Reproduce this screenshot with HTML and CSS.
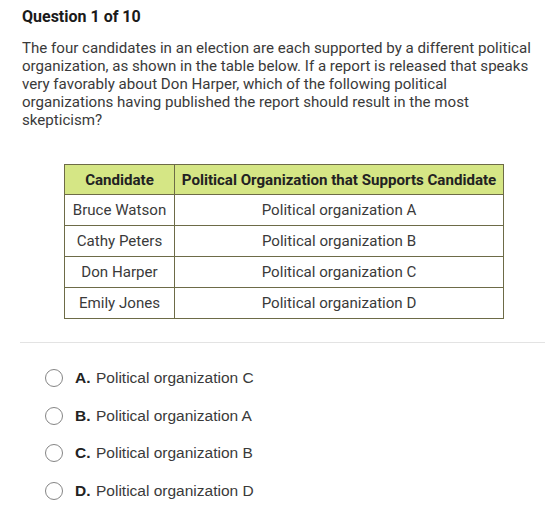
FILE: index.html
```html
<!DOCTYPE html>
<html>
<head>
<meta charset="utf-8">
<link rel="stylesheet" href="styles.css">
</head>
<body>
<div class="page">
  <h1 class="title">Question 1 of 10</h1>
  <p class="question">The four candidates in an election are each supported by a different political organization, as shown in the table below. If a report is released that speaks very favorably about Don Harper, which of the following political organizations having published the report should result in the most skepticism?</p>
  <table class="data">
    <thead>
      <tr><th class="c1">Candidate</th><th>Political Organization that Supports Candidate</th></tr>
    </thead>
    <tbody>
      <tr><td>Bruce Watson</td><td>Political organization A</td></tr>
      <tr><td>Cathy Peters</td><td>Political organization B</td></tr>
      <tr><td>Don Harper</td><td>Political organization C</td></tr>
      <tr><td>Emily Jones</td><td>Political organization D</td></tr>
    </tbody>
  </table>
  <hr class="divider">
  <ul class="options">
    <li class="option"><span class="radio"></span><b class="letter">A.</b><span class="opt-text">Political organization C</span></li>
    <li class="option"><span class="radio"></span><b class="letter">B.</b><span class="opt-text">Political organization A</span></li>
    <li class="option"><span class="radio"></span><b class="letter">C.</b><span class="opt-text">Political organization B</span></li>
    <li class="option"><span class="radio"></span><b class="letter">D.</b><span class="opt-text">Political organization D</span></li>
  </ul>
</div>
</body>
</html>
```
FILE: styles.css
```css
html, body {
  margin: 0;
  padding: 0;
  background: #ffffff;
}
.page {
  padding: 7px 0 0 22px;
  font-family: Roboto, "Liberation Sans", sans-serif;
  color: #333333;
}
.title {
  margin: 0;
  font-size: 16px;
  line-height: 20px;
  font-weight: 700;
  color: #1a1a1a;
}
.question {
  margin: 12px 0 0 0;
  width: 513px;
  font-size: 15.1px;
  line-height: 18px;
  color: #3a3a3a;
}
.data {
  margin: 35px 0 0 42px;
  border-collapse: collapse;
  font-size: 15.1px;
  line-height: 18px;
  color: #3a3a3a;
}
.data th, .data td {
  border: 1px solid #6d6b47;
  text-align: center;
  padding: 0 6px;
}
.data th {
  background: #d5e685;
  height: 29px;
  font-weight: 700;
  color: #222222;
}
.data th.c1 {
  width: 97px;
}
.data td {
  height: 30px;
}
.data td:last-child {
  width: 316px;
}
.divider {
  margin: 23px 5px 0 -2px;
  border: 0;
  border-top: 1px solid #e3e3e3;
}
.options {
  list-style: none;
  margin: 25px 0 0 0;
  padding: 0 0 0 23px;
  font-family: "Liberation Sans", Arial, sans-serif;
  font-size: 15.5px;
  color: #333333;
}
.option {
  display: flex;
  align-items: center;
  height: 20px;
  margin-bottom: 17.7px;
}
.radio {
  width: 18px;
  height: 18px;
  border: 1px solid #858585;
  border-radius: 50%;
  box-sizing: border-box;
  flex: none;
}
.letter {
  margin-left: 12px;
  width: 21px;
  color: #222222;
}
.opt-text {
  color: #3a3a3a;
}
```
